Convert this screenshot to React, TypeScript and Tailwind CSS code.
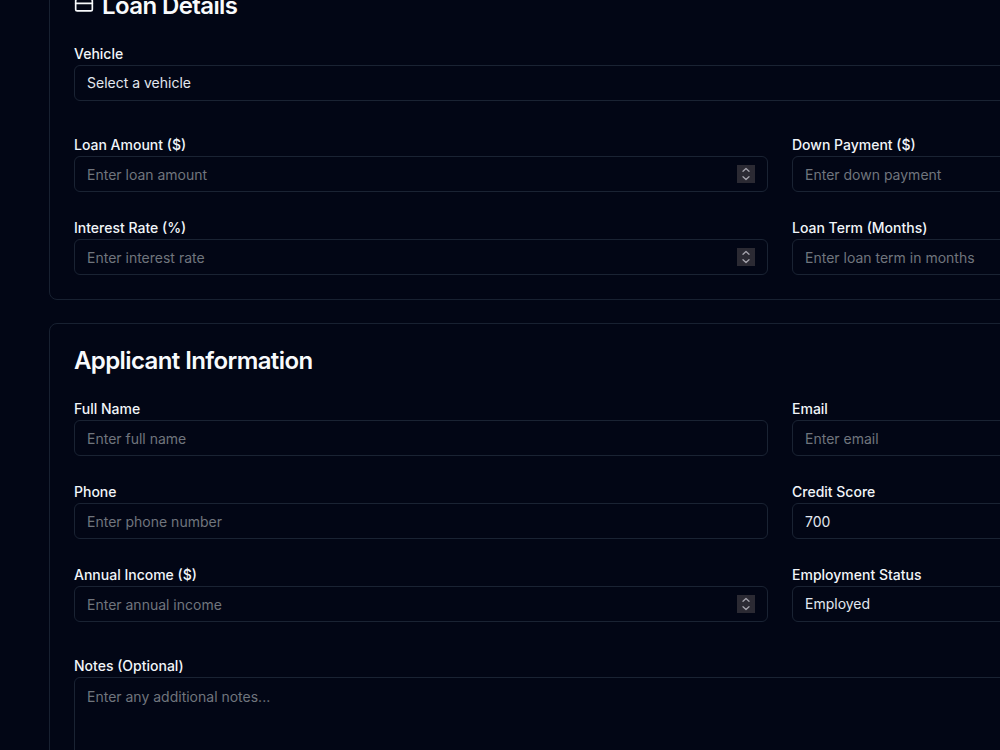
import { useId, useRef, type ReactNode } from "react";
import { ChevronDown, CreditCard } from "lucide-react";

const control =
  "block h-9 w-full rounded-md border border-[#1a2333] bg-transparent px-3 text-sm text-slate-200 outline-none placeholder:text-[#70757d] focus:border-slate-500";

const plainNumber =
  "[appearance:textfield] [&::-webkit-inner-spin-button]:appearance-none";

function Label({ id, children }: { id: string; children: ReactNode }) {
  return (
    <label htmlFor={id} className="block text-sm leading-[22px] font-medium text-slate-100">
      {children}
    </label>
  );
}

type FieldProps = {
  label: string;
  type?: string;
  placeholder?: string;
  defaultValue?: string;
};

function Field({ label, type = "text", placeholder, defaultValue }: FieldProps) {
  const id = useId();
  return (
    <div>
      <Label id={id}>{label}</Label>
      <input
        id={id}
        type={type}
        placeholder={placeholder}
        defaultValue={defaultValue}
        className={control}
      />
    </div>
  );
}

function NumberField({ label, placeholder, defaultValue }: FieldProps) {
  const id = useId();
  const input = useRef<HTMLInputElement>(null);
  return (
    <div>
      <Label id={id}>{label}</Label>
      <div className="relative">
        <input
          ref={input}
          id={id}
          type="number"
          placeholder={placeholder}
          defaultValue={defaultValue}
          className={`${control} ${plainNumber}`}
        />
        <div className="absolute top-[9px] right-[13px] flex size-[18px] flex-col bg-[#2b2a33] text-[#a5a4ad]">
          <button
            type="button"
            tabIndex={-1}
            aria-label={`Increase ${label}`}
            onClick={() => input.current?.stepUp()}
            className="h-[9px]"
          >
            <svg viewBox="0 0 18 9" className="block h-[9px] w-[18px]" fill="none" stroke="currentColor" strokeWidth="1.3" strokeLinecap="round" strokeLinejoin="round">
              <path d="M6 6.2 9 3.4l3 2.8" />
            </svg>
          </button>
          <button
            type="button"
            tabIndex={-1}
            aria-label={`Decrease ${label}`}
            onClick={() => input.current?.stepDown()}
            className="h-[9px]"
          >
            <svg viewBox="0 0 18 9" className="block h-[9px] w-[18px]" fill="none" stroke="currentColor" strokeWidth="1.3" strokeLinecap="round" strokeLinejoin="round">
              <path d="M6 2.8 9 5.6l3-2.8" />
            </svg>
          </button>
        </div>
      </div>
    </div>
  );
}

function SelectField({ label, options }: { label: string; options: string[] }) {
  const id = useId();
  return (
    <div>
      <Label id={id}>{label}</Label>
      <div className="relative">
        <select id={id} className={`${control} appearance-none`}>
          {options.map((option) => (
            <option key={option} className="bg-[#020617]">
              {option}
            </option>
          ))}
        </select>
        <ChevronDown className="pointer-events-none absolute top-2.5 right-3 size-4 opacity-50" />
      </div>
    </div>
  );
}

function NotesField() {
  const id = useId();
  return (
    <div>
      <Label id={id}>Notes (Optional)</Label>
      <textarea
        id={id}
        rows={5}
        placeholder="Enter any additional notes..."
        className="block w-full rounded-md border border-[#1a2333] bg-transparent px-3 py-[9px] text-sm text-slate-200 outline-none placeholder:text-[#70757d] focus:border-slate-500"
      />
    </div>
  );
}

function Card({ title, icon, children }: { title: string; icon?: ReactNode; children: ReactNode }) {
  return (
    <section className="rounded-lg border border-[#182131] p-6">
      <h2 className="mb-6 flex items-center gap-2 text-2xl leading-[26px] font-semibold tracking-tight">
        {icon}
        {title}
      </h2>
      <div className="flex flex-col gap-[33px]">{children}</div>
    </section>
  );
}

function FieldGrid({ children }: { children: ReactNode }) {
  return <div className="grid grid-cols-2 gap-x-6 gap-y-[25px]">{children}</div>;
}

export default function App() {
  return (
    <div className="h-screen overflow-hidden bg-[#020615] font-[Inter,sans-serif] text-slate-50">
      <form className="-mt-8 flex min-w-[1560px] flex-col gap-[23px] px-[49px]">
        <Card title="Loan Details" icon={<CreditCard className="mb-0.5 size-5" />}>
          <SelectField label="Vehicle" options={["Select a vehicle"]} />
          <FieldGrid>
            <NumberField label="Loan Amount ($)" placeholder="Enter loan amount" />
            <NumberField label="Down Payment ($)" placeholder="Enter down payment" />
            <NumberField label="Interest Rate (%)" placeholder="Enter interest rate" />
            <NumberField label="Loan Term (Months)" placeholder="Enter loan term in months" />
          </FieldGrid>
        </Card>
        <Card title="Applicant Information">
          <FieldGrid>
            <Field label="Full Name" placeholder="Enter full name" />
            <Field label="Email" type="email" placeholder="Enter email" />
            <Field label="Phone" type="tel" placeholder="Enter phone number" />
            <NumberField label="Credit Score" defaultValue="700" />
            <NumberField label="Annual Income ($)" placeholder="Enter annual income" />
            <SelectField label="Employment Status" options={["Employed", "Self-Employed", "Unemployed"]} />
          </FieldGrid>
          <NotesField />
        </Card>
      </form>
    </div>
  );
}
